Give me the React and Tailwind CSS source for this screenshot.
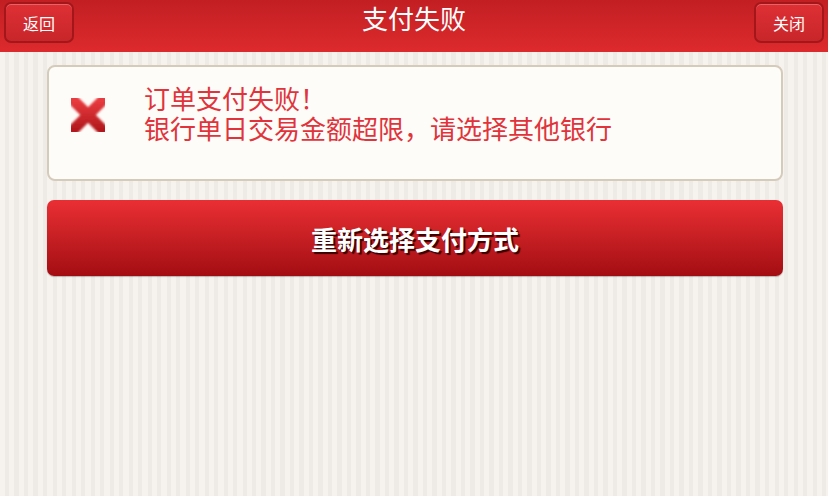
import React from "react";

const font = "font-['Noto_Sans_CJK_SC','Noto_Sans',sans-serif]";

const HeaderButton = ({ children }) => (
  <button className="h-[41px] w-[70px] rounded-[7px] border-2 border-[#a3171a] bg-gradient-to-b from-[#de3035] to-[#c8262a] text-[16px] text-white shadow-[inset_0_1px_0_rgba(255,255,255,0.25)]">
    {children}
  </button>
);

const CrossIcon = () => (
  <svg width="44" height="44" viewBox="0 0 44 44">
    <defs>
      <linearGradient id="xg" x1="0" y1="0" x2="0" y2="1">
        <stop offset="0" stopColor="#e83b3f" />
        <stop offset="1" stopColor="#b3191d" />
      </linearGradient>
      <filter id="xb">
        <feGaussianBlur stdDeviation="0.9" />
      </filter>
    </defs>
    <g filter="url(#xb)" stroke="url(#xg)" strokeWidth="11" strokeLinecap="square">
      <line x1="8" y1="8" x2="36" y2="36" />
      <line x1="36" y1="8" x2="8" y2="36" />
    </g>
  </svg>
);

export default function App() {
  return (
    <div
      className={`${font} h-[496px] w-[828px] overflow-hidden bg-[repeating-linear-gradient(90deg,#f6f3ef_0px,#f6f3ef_5px,#eeeae5_5px,#eeeae5_9.5px)]`}
    >
      <header className="flex h-[52px] items-start justify-between bg-gradient-to-b from-[#c21f23] to-[#dd2a2d] px-[4px] pt-[2px]">
        <HeaderButton>返回</HeaderButton>
        <h1 className="-mt-[1px] text-[26px] leading-[34px] text-white">支付失败</h1>
        <HeaderButton>关闭</HeaderButton>
      </header>

      <div className="ml-[47px] w-[736px] pt-[13px]">
        <div className="flex h-[116px] items-start rounded-[8px] border-2 border-[#d5cbbb] bg-[#fefcf8] pl-[17px] pt-[26px]">
          <CrossIcon />
          <div className="ml-[34px] -mt-[10px] text-[26px] leading-[30px] text-[#e0333b]">
            <p>订单支付失败！</p>
            <p>银行单日交易金额超限，请选择其他银行</p>
          </div>
        </div>

        <button className="mt-[19px] flex h-[76px] w-full items-center justify-center rounded-[7px] bg-gradient-to-b from-[#ea2f34] to-[#a30d12] text-[26px] font-bold text-white shadow-[0_1px_1px_rgba(0,0,0,0.25)] [text-shadow:2px_2px_1px_#3a0000]">
          重新选择支付方式
        </button>
      </div>
    </div>
  );
}
